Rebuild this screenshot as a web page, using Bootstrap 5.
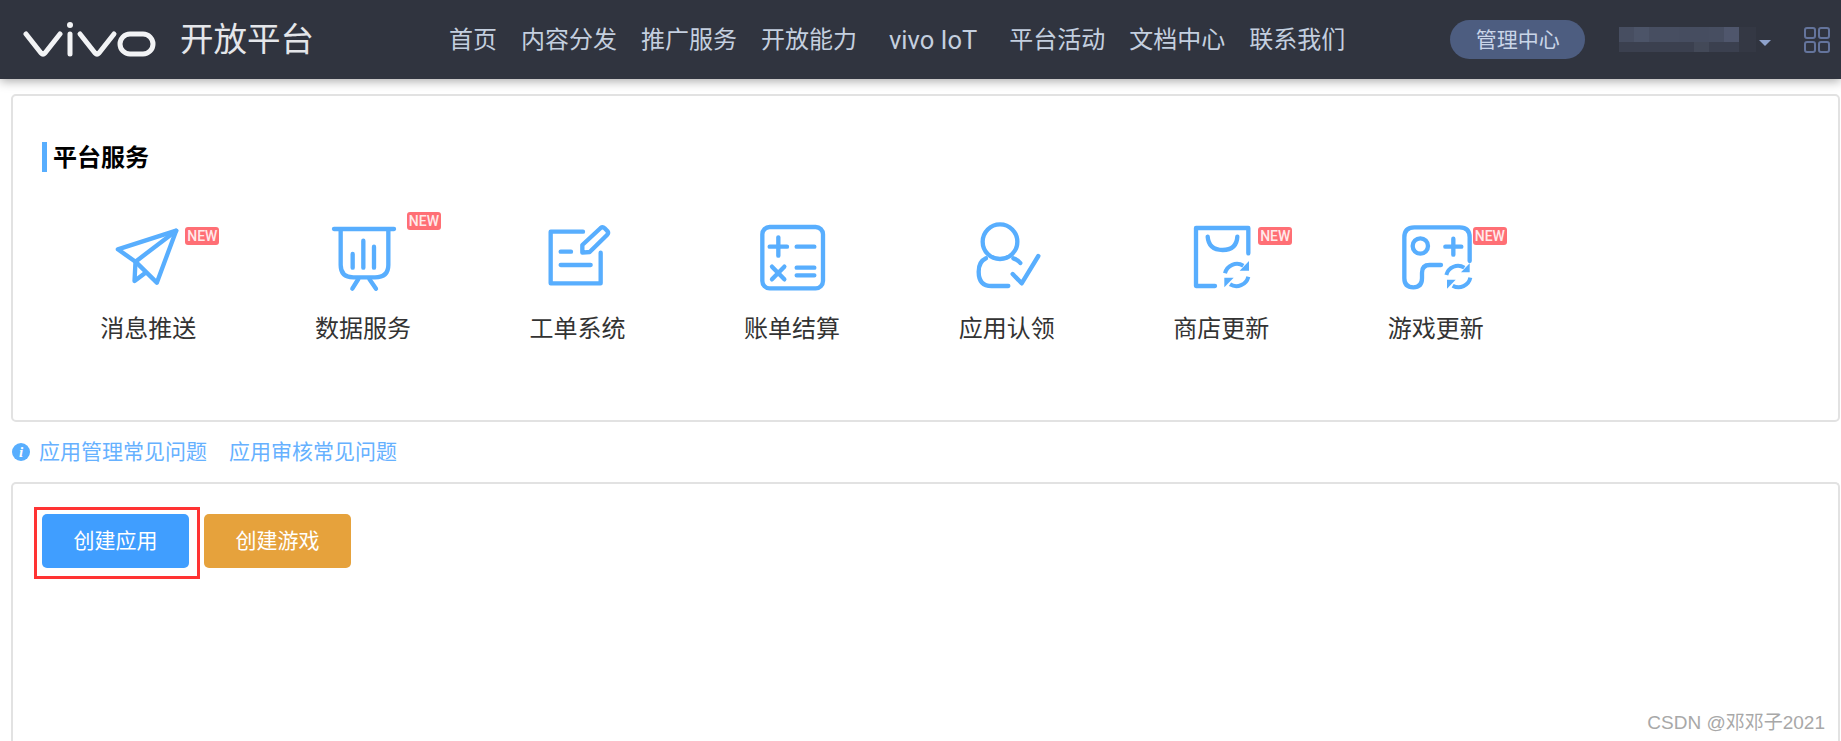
<!DOCTYPE html>
<html lang="zh-CN">
<head>
  <meta charset="UTF-8" />
  <meta name="viewport" content="width=device-width, initial-scale=1.0"/>
  <title>vivo开放平台</title>
  <link href="https://cdn.jsdelivr.net/npm/bootstrap@5.3.3/dist/css/bootstrap.min.css" rel="stylesheet"/>
  <style>
    html, body { height: 100%; overflow: hidden; }
    body { position: relative; background: #fff; font-family: "Liberation Sans", "Noto Sans CJK SC", sans-serif; }
    .top-head { height: 79px; background: #30343f; padding: 0 0 0 23px; box-shadow: 0 2px 10px rgba(0,0,0,.35); flex-wrap: nowrap; justify-content: flex-start; }
    .top-head .logo-svg { width: 133px; height: 42px; display: block; }
    .brand-txt { width: 134px; margin-left: 24px; font-size: 33.5px; line-height: 40px; color: #e4e6ea; white-space: nowrap; }
    .main-nav { margin-left: 135px; gap: 24px; }
    .main-nav .nav-link { padding: 0; font-size: 24px; line-height: 34px; color: #c4cfdf; white-space: nowrap; }
    .main-nav .iot-link { margin: 0 8px 0 8px; font-size: 25.5px; font-family: "Roboto", "Noto Sans CJK SC", sans-serif; }
    .manage-pill { margin-left: 105px; width: 135px; height: 39px; border-radius: 20px; background: #4d5d80; color: #c9d5e8; font-size: 21px; line-height: 39px; text-align: center; }
    .user-mask { margin-left: 34px; width: 137px; height: 25px; display: block; }
    .user-caret { margin-left: 3px; margin-top: 7px; width: 0; height: 0; border-left: 6px solid transparent; border-right: 6px solid transparent; border-top: 6px solid #8ea2cc; }
    .grid-ico { margin-left: 33px; width: 26px; height: 26px; display: block; }
    .page-wrap { padding: 15px 1px 0 11px; }
    .card.plain-box { border: 2px solid #e2e2e2; border-radius: 5px; }
    .service-box { height: 328px; padding: 46px 0 0 29px; }
    .sec-title { border-left: 5px solid #58aefe; padding-left: 6px; height: 30px; font-size: 24px; line-height: 31px; font-weight: 700; color: #000; margin: 0 0 53px 0; }
    .svc-row { margin-left: -1px; }
    .svc-item { position: relative; width: 214.6px; text-align: center; color: #333; font-size: 24px; line-height: 32px; }
    .svc-item svg { display: block; width: 80px; height: 70px; margin: 0 auto 18px; overflow: visible; transform: translateX(1px); fill: none; stroke: #58aefe; stroke-width: 13; stroke-linecap: round; stroke-linejoin: round; }
    .svc-item svg .solid { fill: #58aefe; stroke: none; }
    .svc-item svg .thin { stroke-width: 12; stroke-linecap: butt; }
    .new-tag { position: absolute; top: 2px; left: calc(50% + 37px); width: 34px; height: 18px; border-radius: 3px; background: #ff6f75; color: #ffe9ea; font-family: "Roboto", sans-serif; font-size: 14px; font-weight: 500; line-height: 18px; text-align: center; }
    .new-tag.raised { top: -13px; left: calc(50% + 44px); }
    .faq-row { height: 60px; padding-left: 1px; gap: 22px; font-size: 21px; }
    .faq-row a { color: #66b1ff; text-decoration: none; }
    .info-dot { width: 18px; height: 18px; margin-right: -13px; border-radius: 50%; background: #58aefe; color: #fff; font: italic 700 15px/18px "Liberation Serif", serif; text-align: center; }
    .card.app-box { height: 259px; padding: 30px 0 0 29px; gap: 15px; border-bottom: 0; border-bottom-left-radius: 0; border-bottom-right-radius: 0; }
    .act-btn { position: relative; width: 147px; height: 54px; padding: 0; border: 0; border-radius: 5px; color: #fff; font-size: 21px; line-height: 54px; }
    .act-blue, .act-blue:hover { background: #409eff; color: #fff; }
    .act-orange, .act-orange:hover { background: #e6a23c; color: #fff; }
    .red-mark { position: absolute; left: -8px; top: -7px; width: 166px; height: 72px; border: 3px solid #f33; }
    .csdn-mark { position: absolute; right: 16px; bottom: 6px; color: #a8a8a8; font-size: 19px; line-height: 24px; }
  </style>
</head>
<body>
  <nav class="navbar top-head d-flex align-items-center">
    <svg class="logo-svg" viewBox="23 16 133 42" fill="none" stroke="#f2f3f5" stroke-width="5" stroke-linecap="round" stroke-linejoin="round">
      <path d="M26 31 L41 50 Q43 52 45 50 L60 31"/>
      <path d="M70 31 V51"/>
      <circle cx="70" cy="22" r="3" fill="#f2f3f5" stroke="none"/>
      <path d="M80 31 L95 50 Q97 52 99 50 L114 31"/>
      <rect x="120" y="31" width="33" height="20" rx="10"/>
    </svg>
    <div class="brand-txt">开放平台</div>
    <ul class="nav main-nav flex-nowrap">
      <li class="nav-item"><a class="nav-link" href="#">首页</a></li>
      <li class="nav-item"><a class="nav-link" href="#">内容分发</a></li>
      <li class="nav-item"><a class="nav-link" href="#">推广服务</a></li>
      <li class="nav-item"><a class="nav-link" href="#">开放能力</a></li>
      <li class="nav-item"><a class="nav-link iot-link" href="#">vivo IoT</a></li>
      <li class="nav-item"><a class="nav-link" href="#">平台活动</a></li>
      <li class="nav-item"><a class="nav-link" href="#">文档中心</a></li>
      <li class="nav-item"><a class="nav-link" href="#">联系我们</a></li>
    </ul>
    <div class="manage-pill">管理中心</div>
    <svg class="user-mask" viewBox="0 0 137 25">
      <rect width="120" height="15" fill="#474e61"/>
      <rect x="15" width="15" height="15" fill="#4c5468"/>
      <rect x="60" width="30" height="15" fill="#464d60"/>
      <rect x="105" width="15" height="15" fill="#4f566c"/>
      <rect y="15" width="120" height="10" fill="#3b404f"/>
      <rect x="75" y="15" width="15" height="10" fill="#434958"/>
      <rect x="120" width="17" height="25" fill="#343844"/>
    </svg>
    <div class="user-caret"></div>
    <svg class="grid-ico" viewBox="0 0 26 26" fill="none" stroke="#64749c" stroke-width="2">
      <rect x="1" y="1" width="10" height="10" rx="2"/>
      <rect x="15" y="1" width="10" height="10" rx="2"/>
      <rect x="1" y="15" width="10" height="10" rx="2"/>
      <rect x="15" y="15" width="10" height="10" rx="2"/>
    </svg>
  </nav>

  <div class="page-wrap">
    <div class="card plain-box service-box">
      <h2 class="sec-title">平台服务</h2>
      <div class="d-flex svc-row">
        <div class="svc-item">
          <svg viewBox="88.5 75 240 210">
            <path d="M290 92 L115 148 L168 185 L232 248 Z"/>
            <path d="M290 92 L168 185 L165 243 L198 218"/>
          </svg>
          <span class="new-tag">NEW</span>
          消息推送
        </div>
        <div class="svc-item">
          <svg viewBox="732 75 240 210">
            <path d="M762 87 H942"/>
            <path d="M782 90 V195 Q782 232 820 232 H885 Q925 232 925 195 V90"/>
            <path d="M818 162 V203 M850 122 V203 M882 140 V203"/>
            <path d="M835 237 L817 266 M868 237 L888 266"/>
          </svg>
          <span class="new-tag raised">NEW</span>
          数据服务
        </div>
        <div class="svc-item">
          <svg viewBox="117 75 240 210">
            <path d="M252 95 H155 V250 H305 V158"/>
            <path d="M185 155 H216 M185 195 H275"/>
            <path d="M250 135 L305 84 Q311 79 317 85 L325 93 Q330 99 324 105 L272 156 L250 158 Z"/>
          </svg>
          工单系统
        </div>
        <div class="svc-item">
          <svg viewBox="762 75 240 210">
            <rect x="790" y="81" width="182" height="184" rx="22"/>
            <path d="M812 140 H864 M838 112 V167"/>
            <path d="M893 140 H946"/>
            <path d="M819 200 L856 238 M856 200 L819 238"/>
            <path d="M893 203 H946 M893 226 H946"/>
          </svg>
          账单结算
        </div>
        <div class="svc-item">
          <svg viewBox="204 75 240 210">
            <circle cx="300" cy="125" r="52"/>
            <path d="M258 175 Q236 185 236 215 Q236 258 275 258 H325"/>
            <path d="M340 175 Q353 179 361 189"/>
            <path d="M338 222 L365 250 L415 168"/>
          </svg>
          应用认领
        </div>
        <div class="svc-item">
          <svg viewBox="846 75 240 210">
            <path d="M945 258 H888 V84 H1045 V160"/>
            <path d="M923 110 Q926 150 968 150 Q1010 150 1012 110"/>
            <path class="thin" d="M975 220 A37 37 0 0 1 1030 197"/>
            <path class="solid" d="M1047 183 V212 H1019 Z"/>
            <path class="thin" d="M1045 230 A37 37 0 0 1 990 253"/>
            <path class="solid" d="M973 262 V233 H1001 Z"/>
          </svg>
          <span class="new-tag">NEW</span>
          商店更新
        </div>
        <div class="svc-item">
          <svg viewBox="288 75 240 210">
            <path d="M506 183 V112 Q506 82 476 82 H340 Q310 82 310 112 V235 Q310 262 337 262 Q363 262 363 235 V218 Q363 195 386 195 H420"/>
            <circle cx="358" cy="138" r="23"/>
            <path d="M433 140 H481 M457 116 V164"/>
            <path class="thin" d="M436 225 A36 36 0 0 1 490 203"/>
            <path class="solid" d="M506 190 V217 H480 Z"/>
            <path class="thin" d="M508 233 A36 36 0 0 1 455 257"/>
            <path class="solid" d="M438 266 V239 H464 Z"/>
          </svg>
          <span class="new-tag">NEW</span>
          游戏更新
        </div>
      </div>
    </div>

    <div class="d-flex align-items-center faq-row">
      <span class="info-dot">i</span>
      <a href="#">应用管理常见问题</a>
      <a href="#">应用审核常见问题</a>
    </div>

    <div class="card plain-box app-box flex-row align-items-start">
      <button type="button" class="btn act-btn act-blue">创建应用<span class="red-mark"></span></button>
      <button type="button" class="btn act-btn act-orange">创建游戏</button>
    </div>
  </div>

  <div class="csdn-mark">CSDN @邓邓子2021</div>
</body>
</html>
